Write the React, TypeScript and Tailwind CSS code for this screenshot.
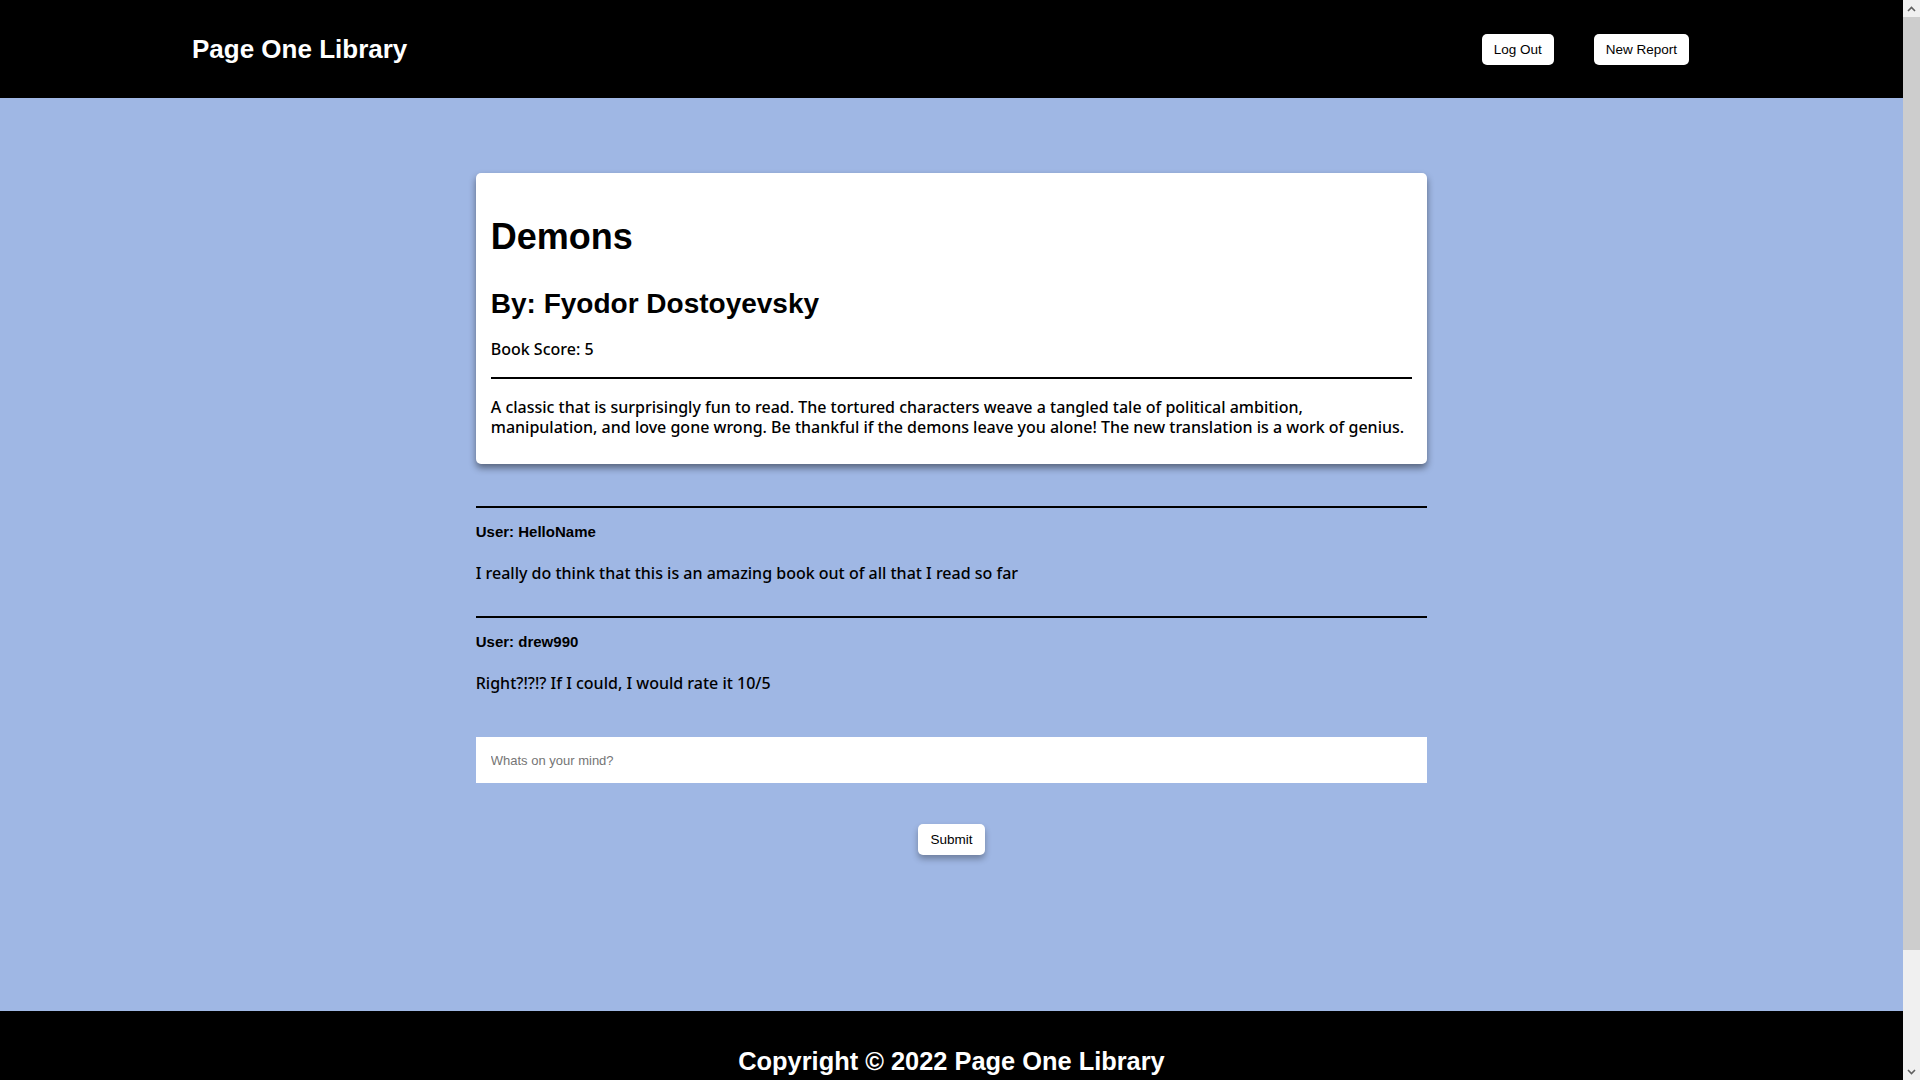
import React, { useState } from 'react';

interface Comment {
  user: string;
  text: string;
}

const comments: Comment[] = [
  { user: 'HelloName', text: 'I really do think that this is an amazing book out of all that I read so far' },
  { user: 'drew990', text: 'Right?!?!? If I could, I would rate it 10/5' },
];

const ScrollBar: React.FC = () => (
  <div className="sticky top-0 h-screen w-[17px] shrink-0 bg-[#f0f0f0] flex flex-col">
    <div className="h-[17px] flex items-center justify-center">
      <svg width="9" height="6" viewBox="0 0 9 6">
        <path d="M1 5 L4.5 1.5 L8 5" fill="none" stroke="#606060" strokeWidth="1.6" />
      </svg>
    </div>
    <div className="h-[933px] bg-[#cdcdcd]" />
    <div className="flex-1" />
    <div className="h-[17px] flex items-center justify-center">
      <svg width="9" height="6" viewBox="0 0 9 6">
        <path d="M1 1 L4.5 4.5 L8 1" fill="none" stroke="#606060" strokeWidth="1.6" />
      </svg>
    </div>
  </div>
);

const App: React.FC = () => {
  const [note, setNote] = useState('');

  return (
    <div className="flex items-start bg-[#9fb7e4] font-['Liberation_Sans',Arial,sans-serif] text-black">
      <div className="flex-1 min-w-0">
        <header className="h-[98px] bg-black flex items-center justify-between pl-[192px] pr-[214px]">
          <h1 className="text-white text-[26px] leading-[30px] font-bold">Page One Library</h1>
          <div className="flex items-center gap-10">
            <button className="bg-white rounded-[5px] px-3 py-2 text-[13.5px] leading-[15px]">Log Out</button>
            <button className="bg-white rounded-[5px] px-3 py-2 text-[13.5px] leading-[15px]">New Report</button>
          </div>
        </header>

        <main className="pt-[75px] pb-[156px]">
          <div className="w-1/2 mx-auto">
            <div className="bg-white rounded-[5px] shadow-[0_4px_7px_rgba(0,0,0,0.45)] px-[15px] pt-[44px] pb-[27px]">
              <h2 className="text-[36px] leading-[40px] font-bold">Demons</h2>
              <h3 className="mt-[31px] text-[28px] leading-[32px] font-bold">By: Fyodor Dostoyevsky</h3>
              <p className="mt-[19px] font-['Noto_Sans',sans-serif] font-medium text-[16px] leading-[20px]">Book Score: 5</p>
              <hr className="mt-[18px] border-0 border-t-2 border-black" />
              <p className="mt-[18px] font-['Noto_Sans',sans-serif] font-medium text-[16px] leading-[20px]">
                A classic that is surprisingly fun to read. The tortured characters weave a tangled tale of political ambition, manipulation, and love gone wrong. Be thankful if the demons leave you alone! The new translation is a work of genius.
              </p>
            </div>

            <div className="mt-[42px] flex flex-col gap-[33px]">
              {comments.map((c) => (
                <div key={c.user}>
                  <hr className="border-0 border-t-2 border-black" />
                  <p className="mt-[15px] text-[15px] leading-[18px] font-bold">User: {c.user}</p>
                  <p className="mt-[22px] font-['Noto_Sans',sans-serif] font-medium text-[16px] leading-[20px]">{c.text}</p>
                </div>
              ))}
            </div>

            <input
              value={note}
              onChange={(e) => setNote(e.target.value)}
              placeholder="Whats on your mind?"
              className="mt-[44px] block w-full h-[46px] bg-white pl-[15px] text-[13px] outline-none placeholder:text-[#757575]"
            />

            <div className="mt-[41px] flex justify-center">
              <button className="bg-white rounded-[5px] px-3 py-2 text-[13.5px] leading-[15px] shadow-[0_4px_6px_rgba(0,0,0,0.3)]">
                Submit
              </button>
            </div>
          </div>
        </main>

        <footer className="h-[200px] bg-black pt-[35px] text-center">
          <p className="text-white text-[25.4px] leading-[30px] font-bold">Copyright © 2022 Page One Library</p>
        </footer>
      </div>
      <ScrollBar />
    </div>
  );
};

export default App;
